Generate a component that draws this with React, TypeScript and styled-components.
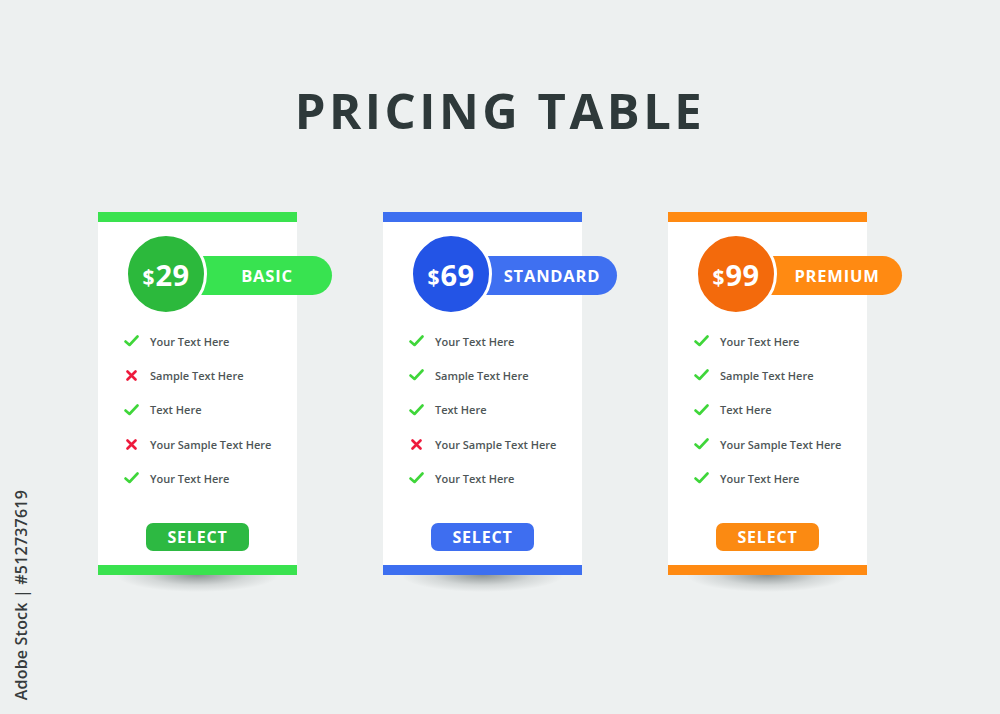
import React from 'react';
import styled, { createGlobalStyle } from 'styled-components';

const GlobalStyle = createGlobalStyle`
  html, body {
    margin: 0;
    padding: 0;
    background: #edf0f0;
  }
  body {
    font-family: "Open Sans", "Liberation Sans", Arial, sans-serif;
  }
`;

const Page = styled.div`
  position: relative;
  width: 1000px;
  height: 714px;
  overflow: hidden;
  background: #edf0f0;
  display: flex;
  flex-direction: column;
`;

const Title = styled.h1`
  margin: 78px 0 0;
  text-align: center;
  font-family: "Open Sans", "Liberation Sans", sans-serif;
  font-weight: 700;
  font-size: 49px;
  line-height: 64px;
  letter-spacing: 3.5px;
  color: #2e393a;
`;

const CardRow = styled.div`
  display: flex;
  gap: 86px;
  padding-left: 98px;
  margin-top: 70px;
`;

const Card = styled.div<{ $accent: string }>`
  position: relative;
  width: 199px;
  box-sizing: border-box;
  background: #ffffff;
  border-top: 10px solid ${p => p.$accent};
  border-bottom: 10px solid ${p => p.$accent};
  padding: 11px 0 14px;
  display: flex;
  flex-direction: column;

  &::after {
    content: '';
    position: absolute;
    left: 18px;
    right: 18px;
    bottom: -27px;
    height: 17px;
    background: radial-gradient(ellipse 50% 100% at 50% 0%, rgba(60, 70, 70, 0.55), rgba(60, 70, 70, 0.15) 60%, rgba(60, 70, 70, 0) 100%);
  }
`;

const Header = styled.div`
  display: flex;
  align-items: center;
  margin-left: 27px;
`;

const Circle = styled.div<{ $color: string }>`
  position: relative;
  z-index: 1;
  width: 76px;
  height: 76px;
  border-radius: 50%;
  border: 3px solid #ffffff;
  background: ${p => p.$color};
  color: #ffffff;
  display: flex;
  align-items: center;
  justify-content: center;
  font-family: "Open Sans", "Liberation Sans", sans-serif;
  font-weight: 700;
  flex-shrink: 0;
`;

const Dollar = styled.span`
  font-size: 21px;
  margin-top: 5px;
  margin-right: 1px;
`;

const Amount = styled.span`
  font-size: 29px;
  letter-spacing: 0.5px;
`;

const Pill = styled.div<{ $color: string }>`
  flex-shrink: 0;
  margin-left: -12px;
  margin-top: 3px;
  width: 137px;
  height: 39px;
  box-sizing: border-box;
  padding-left: 7px;
  border-radius: 0 20px 20px 0;
  background: ${p => p.$color};
  color: #ffffff;
  display: flex;
  align-items: center;
  justify-content: center;
  font-family: "Open Sans", "Liberation Sans", sans-serif;
  font-weight: 700;
  font-size: 16.5px;
  letter-spacing: 0.8px;
`;

const FeatureList = styled.ul`
  list-style: none;
  margin: 9px 0 0;
  padding: 0 0 0 26px;
`;

const Feature = styled.li`
  height: 34.3px;
  display: flex;
  align-items: center;
  gap: 11px;
  font-family: "Open Sans", "Liberation Sans", sans-serif;
  font-weight: 600;
  font-size: 11px;
  color: #4e5657;
`;

const IconBox = styled.span`
  width: 15px;
  display: flex;
  justify-content: center;
`;

const SelectButton = styled.button<{ $color: string }>`
  align-self: center;
  margin-top: 28px;
  width: 103px;
  height: 28px;
  border: none;
  border-radius: 7px;
  background: ${p => p.$color};
  color: #ffffff;
  font-family: "Open Sans", "Liberation Sans", sans-serif;
  font-weight: 700;
  font-size: 16px;
  letter-spacing: 0.8px;
  padding: 0;
  cursor: pointer;
`;

const Credit = styled.div`
  position: absolute;
  left: 10px;
  bottom: 14px;
  writing-mode: vertical-rl;
  transform: rotate(180deg);
  font-family: "Open Sans", "Liberation Sans", sans-serif;
  font-size: 16px;
  font-weight: 600;
  color: #363b3c;
  letter-spacing: 0.2px;
`;

const Check = () => (
  <svg width="15" height="12" viewBox="0 0 15 12">
    <path d="M1.5 6.5 L5.5 10 L13.5 1.5" fill="none" stroke="#3fd63a" strokeWidth="2.6" strokeLinecap="round" strokeLinejoin="round" />
  </svg>
);

const Cross = () => (
  <svg width="11" height="11" viewBox="0 0 11 11">
    <path d="M1.5 1.5 L9.5 9.5 M9.5 1.5 L1.5 9.5" fill="none" stroke="#ee1b3d" strokeWidth="2.6" strokeLinecap="round" />
  </svg>
);

type Plan = {
  price: string;
  name: string;
  accent: string;
  circle: string;
  pill: string;
  button: string;
  features: [string, boolean][];
};

const plans: Plan[] = [
  {
    price: '29',
    name: 'BASIC',
    accent: '#3ae24f',
    circle: '#2cb93c',
    pill: '#38e350',
    button: '#2db942',
    features: [
      ['Your Text Here', true],
      ['Sample Text Here', false],
      ['Text Here', true],
      ['Your Sample Text Here', false],
      ['Your Text Here', true],
    ],
  },
  {
    price: '69',
    name: 'STANDARD',
    accent: '#3d6ff0',
    circle: '#2354e6',
    pill: '#3f70f1',
    button: '#3e6ef0',
    features: [
      ['Your Text Here', true],
      ['Sample Text Here', true],
      ['Text Here', true],
      ['Your Sample Text Here', false],
      ['Your Text Here', true],
    ],
  },
  {
    price: '99',
    name: 'PREMIUM',
    accent: '#ff8a12',
    circle: '#f36a0c',
    pill: '#ff8a12',
    button: '#fb8a12',
    features: [
      ['Your Text Here', true],
      ['Sample Text Here', true],
      ['Text Here', true],
      ['Your Sample Text Here', true],
      ['Your Text Here', true],
    ],
  },
];

export default function App() {
  return (
    <Page>
      <GlobalStyle />
      <Title>PRICING TABLE</Title>
      <CardRow>
        {plans.map(plan => (
          <Card key={plan.name} $accent={plan.accent}>
            <Header>
              <Circle $color={plan.circle}>
                <Dollar>$</Dollar>
                <Amount>{plan.price}</Amount>
              </Circle>
              <Pill $color={plan.pill}>{plan.name}</Pill>
            </Header>
            <FeatureList>
              {plan.features.map(([text, ok], i) => (
                <Feature key={i}>
                  <IconBox>{ok ? <Check /> : <Cross />}</IconBox>
                  {text}
                </Feature>
              ))}
            </FeatureList>
            <SelectButton $color={plan.button}>SELECT</SelectButton>
          </Card>
        ))}
      </CardRow>
      <Credit>Adobe Stock | #512737619</Credit>
    </Page>
  );
}
